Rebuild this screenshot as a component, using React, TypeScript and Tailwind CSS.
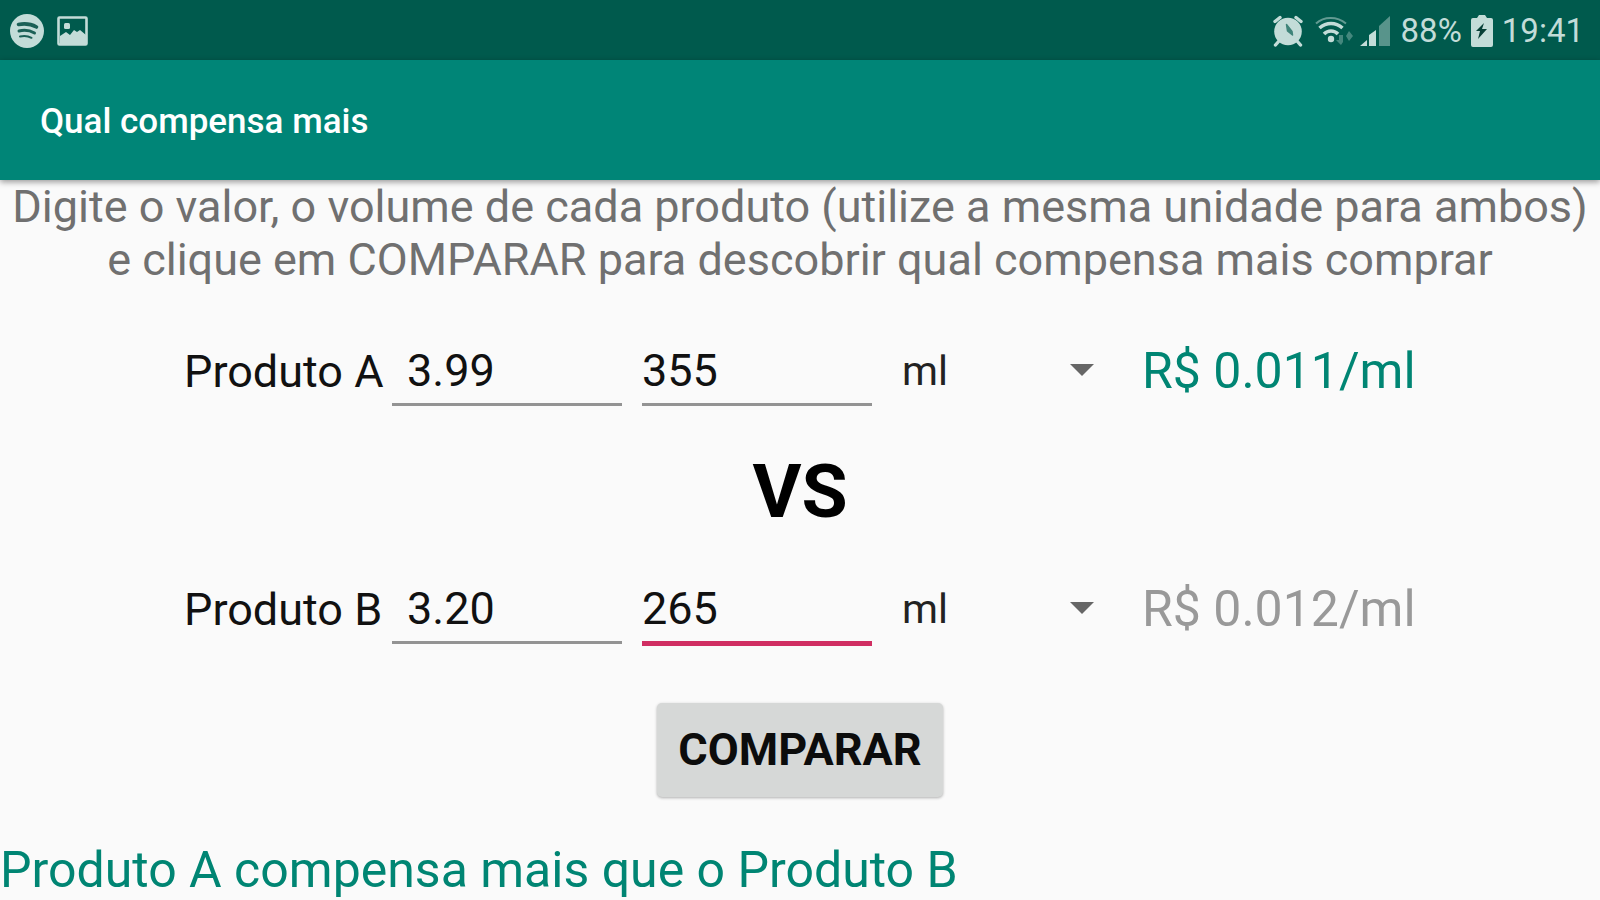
import { useState } from 'react';
import { clsx } from 'clsx';

type ProductId = 'a' | 'b';

interface Product {
  name: string;
  price: string;
  volume: string;
  unit: string;
}

const units = ['ml', 'l', 'g', 'kg'];

const initialProducts: Record<ProductId, Product> = {
  a: { name: 'Produto A', price: '3.99', volume: '355', unit: 'ml' },
  b: { name: 'Produto B', price: '3.20', volume: '265', unit: 'ml' },
};

const inputClass = 'w-[230px] bg-transparent pb-1 text-[45px] leading-[53px] text-[#111] outline-none';
const idleInputClass = 'h-[64px] border-b-3 border-[#939393]';
const activeInputClass = 'h-[66px] border-b-5 border-[#d02e62]';

function unitPrice(product: Product) {
  return Number(product.price) / Number(product.volume);
}

function StatusBar() {
  return (
    <div className="flex h-[60px] items-center justify-between bg-[#005a4d] pt-px pr-4 pl-[10px] text-[#c3dcd8]">
      <div className="flex items-center gap-[13px]">
        <svg width="34" height="34" viewBox="0 0 34 34" fill="none" aria-hidden="true">
          <circle cx="17" cy="17" r="17" fill="currentColor" />
          <g stroke="#1b6056" strokeLinecap="round">
            <path d="M8.500 10.500c6-1.200 12-.8 18 2.500" strokeWidth="3.600" />
            <path d="M9 17c5-1.200 10.500-.8 15.500 2" strokeWidth="3" />
            <path d="M10 22.500c4.500-1 8-.6 11.500 1.300" strokeWidth="2" />
          </g>
        </svg>
        <svg width="31" height="30" viewBox="0 0 31 30" aria-hidden="true">
          <rect x="1.500" y="1.500" width="28" height="27" rx="1" fill="none" stroke="currentColor" strokeWidth="2.600" />
          <rect x="7" y="7" width="6" height="6" rx="1.500" fill="currentColor" />
          <path d="M3 20l6-4 4 3 4-5 3 2 3-2 6 5v9H3z" fill="currentColor" />
        </svg>
      </div>

      <div className="flex items-center text-[33px] leading-[40px]">
        <svg width="32" height="32" viewBox="0 0 32 32" className="mr-[11px]" aria-hidden="true">
          <circle cx="16" cy="16.500" r="13.800" fill="currentColor" />
          <path d="M3 6.500l5-4M29 6.500l-5-4M7 26l-3.500 4M25 26l3.500 4" stroke="currentColor" strokeWidth="3.400" strokeLinecap="round" />
          <path d="M14.500 9.500l1 6.500 5 4-.5-3.500z" fill="#3f8479" stroke="#3f8479" strokeWidth="1.500" strokeLinejoin="round" />
        </svg>
        <svg width="38" height="32" viewBox="0 0 38 32" className="mr-[7px]" fill="none" stroke="currentColor" aria-hidden="true">
          <path d="M1 8.500C9 1 22 1 31 8.500" strokeWidth="2" opacity=".5" />
          <path d="M4.500 13c7-6 16-6 23 0" strokeWidth="3.600" />
          <path d="M9 19c4-4 10-4 14 0" strokeWidth="3.600" />
          <circle cx="16" cy="24" r="3.200" fill="currentColor" stroke="none" />
          <path d="M24 20v5h-3l5 5 2-3v-7zM34 16l4 5-4 5-3-5z" fill="currentColor" stroke="none" opacity=".35" />
        </svg>
        <svg width="30" height="32" viewBox="0 0 30 32" className="mr-[11px]" fill="currentColor" aria-hidden="true">
          <path d="M0 31l7-6v6zM9 20l7-5v16H9z" />
          <path d="M19 11l11-10v30H19z" opacity=".45" />
        </svg>
        <span>88%</span>
        <svg width="22" height="32" viewBox="0 0 22 32" className="mx-[9px]" aria-hidden="true">
          <path d="M6 3l2-3h6l2 3h4q2 0 2 2v25q0 2-2 2H2q-2 0-2-2V5q0-2 2-2z" fill="currentColor" />
          <path d="M13 8l-8 8h4l-2 8 9-10h-5z" fill="#063f36" />
        </svg>
        <span>19:41</span>
      </div>
    </div>
  );
}

interface ProductRowProps {
  id: ProductId;
  product: Product;
  best: boolean;
  active: boolean;
  onChange: (changes: Partial<Product>) => void;
}

function ProductRow({ id, product, best, active, onChange }: ProductRowProps) {
  return (
    <div className="flex h-[68px] items-start justify-center">
      <label htmlFor={`${id}-price`} className="w-[208px] pt-[3px] text-[45px] leading-[53px] text-[#111]">
        {product.name}
      </label>
      <input
        id={`${id}-price`}
        inputMode="decimal"
        value={product.price}
        onChange={(event) => onChange({ price: event.target.value })}
        className={clsx(inputClass, idleInputClass, 'pl-[15px]')}
      />
      <input
        aria-label={`Volume do ${product.name}`}
        inputMode="decimal"
        value={product.volume}
        onChange={(event) => onChange({ volume: event.target.value })}
        className={clsx(inputClass, 'ml-5', active ? activeInputClass : idleInputClass)}
      />
      <div className="relative ml-[30px] w-[212px]">
        <select
          aria-label={`Unidade do ${product.name}`}
          value={product.unit}
          onChange={(event) => onChange({ unit: event.target.value })}
          className="h-[58px] w-full appearance-none bg-transparent text-[41px] leading-[53px] text-[#222] outline-none"
        >
          {units.map((unit) => (
            <option key={unit}>{unit}</option>
          ))}
        </select>
        <svg width="24" height="12" viewBox="0 0 24 12" className="pointer-events-none absolute top-[22px] right-5" aria-hidden="true">
          <path d="M0 0h24L12 12z" fill="#666" />
        </svg>
      </div>
      <output className={clsx('ml-7 w-[274px] text-[50px] leading-[58px] whitespace-nowrap', best ? 'text-[#008573]' : 'text-[#999]')}>
        R$ {unitPrice(product).toFixed(3)}/{product.unit}
      </output>
    </div>
  );
}

export default function App() {
  const [products, setProducts] = useState(initialProducts);
  const [winner, setWinner] = useState<ProductId>('a');
  const other: ProductId = winner === 'a' ? 'b' : 'a';

  const update = (id: ProductId) => (changes: Partial<Product>) =>
    setProducts((current) => ({ ...current, [id]: { ...current[id], ...changes } }));

  const compare = () => setWinner(unitPrice(products.a) <= unitPrice(products.b) ? 'a' : 'b');

  return (
    <div className="min-h-screen bg-[#fafafa] font-[Roboto,sans-serif]">
      <StatusBar />
      <header className="flex h-[120px] items-center bg-[#008577] px-10 pt-1 shadow-[0_2px_6px_rgba(0,0,0,0.4)]">
        <h1 className="text-[35px] leading-[42px] font-medium text-white">Qual compensa mais</h1>
      </header>

      <main>
        <p className="text-center text-[45px] leading-[53px] text-[#707070]">
          Digite o valor, o volume de cada produto (utilize a mesma unidade para ambos)
          <br />e clique em COMPARAR para descobrir qual compensa mais comprar
        </p>

        <div className="pt-[56px]">
          <ProductRow id="a" product={products.a} best={winner === 'a'} active={false} onChange={update('a')} />
          <div className="pt-9 pb-11 text-center text-[75px] leading-[90px] font-bold text-black">VS</div>
          <ProductRow id="b" product={products.b} best={winner === 'b'} active onChange={update('b')} />
        </div>

        <div className="flex justify-center pt-[55px]">
          <button
            type="button"
            onClick={compare}
            className="h-[94px] rounded-[5px] bg-[#d6d8d7] px-[21px] text-[45px] leading-[52px] font-bold text-[#0c0c0c] shadow-[0_1px_3px_rgba(0,0,0,0.3)]"
          >
            COMPARAR
          </button>
        </div>

        <p className="mt-[44px] text-[50px] leading-[58px] text-[#008573]">
          {products[winner].name} compensa mais que o {products[other].name}
        </p>
      </main>
    </div>
  );
}
